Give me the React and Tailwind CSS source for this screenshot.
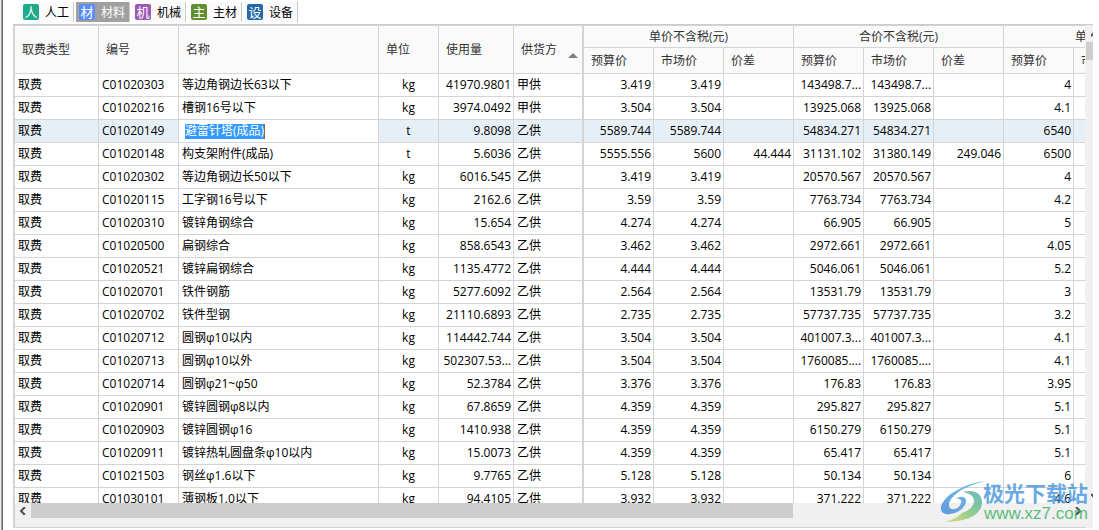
import { useState } from "react";

const tabs = [
  { id: "labor", badge: "人", label: "人工", color: "bg-[#1fab89]" },
  { id: "material", badge: "材", label: "材料", color: "bg-[#5b8cff]" },
  { id: "machine", badge: "机", label: "机械", color: "bg-[#9b59b6]" },
  { id: "main", badge: "主", label: "主材", color: "bg-[#5f8f2f]" },
  { id: "equipment", badge: "设", label: "设备", color: "bg-[#2468a8]" },
];

// code, name, unit, usage, supplier, unit price x3, total price x3, taxed price
const rows = [
  ["C01020303", "等边角钢边长63以下", "kg", "41970.9801", "甲供", "3.419", "3.419", "", "143498.7...", "143498.7...", "", "4"],
  ["C01020216", "槽钢16号以下", "kg", "3974.0492", "甲供", "3.504", "3.504", "", "13925.068", "13925.068", "", "4.1"],
  ["C01020149", "避雷针塔(成品)", "t", "9.8098", "乙供", "5589.744", "5589.744", "", "54834.271", "54834.271", "", "6540"],
  ["C01020148", "构支架附件(成品)", "t", "5.6036", "乙供", "5555.556", "5600", "44.444", "31131.102", "31380.149", "249.046", "6500"],
  ["C01020302", "等边角钢边长50以下", "kg", "6016.545", "乙供", "3.419", "3.419", "", "20570.567", "20570.567", "", "4"],
  ["C01020115", "工字钢16号以下", "kg", "2162.6", "乙供", "3.59", "3.59", "", "7763.734", "7763.734", "", "4.2"],
  ["C01020310", "镀锌角钢综合", "kg", "15.654", "乙供", "4.274", "4.274", "", "66.905", "66.905", "", "5"],
  ["C01020500", "扁钢综合", "kg", "858.6543", "乙供", "3.462", "3.462", "", "2972.661", "2972.661", "", "4.05"],
  ["C01020521", "镀锌扁钢综合", "kg", "1135.4772", "乙供", "4.444", "4.444", "", "5046.061", "5046.061", "", "5.2"],
  ["C01020701", "铁件钢筋", "kg", "5277.6092", "乙供", "2.564", "2.564", "", "13531.79", "13531.79", "", "3"],
  ["C01020702", "铁件型钢", "kg", "21110.6893", "乙供", "2.735", "2.735", "", "57737.735", "57737.735", "", "3.2"],
  ["C01020712", "圆钢φ10以内", "kg", "114442.744", "乙供", "3.504", "3.504", "", "401007.3...", "401007.3...", "", "4.1"],
  ["C01020713", "圆钢φ10以外", "kg", "502307.53...", "乙供", "3.504", "3.504", "", "1760085....", "1760085....", "", "4.1"],
  ["C01020714", "圆钢φ21~φ50", "kg", "52.3784", "乙供", "3.376", "3.376", "", "176.83", "176.83", "", "3.95"],
  ["C01020901", "镀锌圆钢φ8以内", "kg", "67.8659", "乙供", "4.359", "4.359", "", "295.827", "295.827", "", "5.1"],
  ["C01020903", "镀锌圆钢φ16", "kg", "1410.938", "乙供", "4.359", "4.359", "", "6150.279", "6150.279", "", "5.1"],
  ["C01020911", "镀锌热轧圆盘条φ10以内", "kg", "15.0073", "乙供", "4.359", "4.359", "", "65.417", "65.417", "", "5.1"],
  ["C01021503", "钢丝φ1.6以下", "kg", "9.7765", "乙供", "5.128", "5.128", "", "50.134", "50.134", "", "6"],
  ["C01030101", "薄钢板1.0以下", "kg", "94.4105", "乙供", "3.932", "3.932", "", "371.222", "371.222", "", "4.6"],
];

const groups = ["单价不含税(元)", "合价不含税(元)", "单价含税(元)"];

const Chevron = ({ d }) => (
  <svg width="8" height="8" viewBox="0 0 8 8" fill="none" stroke="#505050" strokeWidth="2">
    <path d={d} />
  </svg>
);

const TabBar = ({ active, onSelect }) => (
  <div role="tablist" className="flex h-6 shrink-0 gap-[2px] pt-[2px] pl-[7px]">
    {tabs.map((tab) => {
      const selected = tab.id === active;
      return (
        <button
          key={tab.id}
          type="button"
          role="tab"
          aria-selected={selected}
          onClick={() => onSelect(tab.id)}
          className={`flex h-5 items-center gap-[6px] border-r border-[#c8c8c8] pr-1 pl-[3px] ${
            selected ? "bg-[#a0a0a0] text-white" : "bg-[#fafafa] text-black"
          }`}
        >
          <span className={`flex size-4 items-center justify-center rounded-[2px] text-[13px] leading-4 text-white ${tab.color}`}>
            {tab.badge}
          </span>
          <span className="pt-[2px] leading-4">{tab.label}</span>
        </button>
      );
    })}
  </div>
);

const HeadCell = ({ children, className = "pl-[7px] text-left", ...rest }) => (
  <th
    className={`border-r border-b border-[#d4d4d4] bg-[#fafafa] font-normal whitespace-nowrap text-[#333333] ${className}`}
    {...rest}
  >
    {children}
  </th>
);

const Cell = ({ children, className = "" }) => (
  <td className={`h-[23px] overflow-hidden border-r border-b border-[#d4d4d4] whitespace-nowrap ${className}`}>
    {children}
  </td>
);

const MaterialTable = () => {
  const [selectedCode, setSelectedCode] = useState("C01020149");
  const [editedName, setEditedName] = useState("避雷针塔(成品)");

  return (
    <table className="w-[1199px] table-fixed border-separate border-spacing-0 leading-4">
      <colgroup>
        <col className="w-[84px]" />
        <col className="w-[80px]" />
        <col className="w-[200px]" />
        <col className="w-[60px]" />
        <col className="w-[75px]" />
        <col className="w-[70px]" />
        <col span={9} className="w-[70px]" />
      </colgroup>
      <thead>
        <tr className="h-[22px]">
          <HeadCell rowSpan={2}>取费类型</HeadCell>
          <HeadCell rowSpan={2}>编号</HeadCell>
          <HeadCell rowSpan={2}>名称</HeadCell>
          <HeadCell rowSpan={2}>单位</HeadCell>
          <HeadCell rowSpan={2}>使用量</HeadCell>
          <HeadCell rowSpan={2} className="border-r-2 pl-[7px] text-left" aria-sort="ascending">
            <div className="flex items-center justify-between pr-1">
              供货方
              <svg className="mt-3" width="10" height="5" viewBox="0 0 10 5" fill="#808080">
                <path d="M5 0 10 5H0z" />
              </svg>
            </div>
          </HeadCell>
          {groups.map((group) => (
            <HeadCell key={group} colSpan={3} className="text-center">
              {group}
            </HeadCell>
          ))}
        </tr>
        <tr className="h-[26px]">
          {groups.map((group) =>
            ["预算价", "市场价", "价差"].map((label) => (
              <HeadCell key={group + label}>{label}</HeadCell>
            ))
          )}
        </tr>
      </thead>
      <tbody>
        {rows.map(([code, name, unit, usage, supplier, ...prices]) => {
          const selected = code === selectedCode;
          return (
            <tr key={code} onClick={() => setSelectedCode(code)} className={selected ? "bg-[#e6eff5]" : "bg-white"}>
              <Cell className="pl-[3px]">取费</Cell>
              <Cell className="pl-[3px]">{code}</Cell>
              {code === "C01020149" ? (
                <Cell className="bg-white pl-[6px]">
                  <input
                    aria-label="名称"
                    value={editedName}
                    onChange={(e) => setEditedName(e.target.value)}
                    className="block h-[15px] field-sizing-content border-r border-[#a06030] bg-[#3399ff] leading-4 text-white outline-none"
                  />
                </Cell>
              ) : (
                <Cell className="pl-[3px]">{name}</Cell>
              )}
              <Cell className="text-center">{unit}</Cell>
              <Cell className="pr-[2px] text-right">{usage}</Cell>
              <Cell className="border-r-2 pl-[3px]">{supplier}</Cell>
              {prices.map((price, i) => (
                <Cell key={i} className="pr-[2px] text-right">
                  {price}
                </Cell>
              ))}
              <Cell />
              <Cell />
            </tr>
          );
        })}
      </tbody>
    </table>
  );
};

const VerticalScrollbar = () => (
  <div className="w-[7px] shrink-0 overflow-hidden bg-[#f0f0f0] pb-6">
    <div className="flex h-full w-[17px] flex-col">
      <button type="button" aria-label="向上滚动" className="flex h-[17px] shrink-0 items-center justify-center">
        <Chevron d="M0 6 4 2l4 4" />
      </button>
      <div className="h-[18px] shrink-0 bg-[#cdcdcd]" />
      <div className="flex-1" />
      <button type="button" aria-label="向下滚动" className="flex h-[17px] shrink-0 items-center justify-center">
        <Chevron d="M0 2l4 4 4-4" />
      </button>
    </div>
  </div>
);

const HorizontalScrollbar = () => (
  <div className="flex h-[15px] shrink-0">
    <button type="button" aria-label="向左滚动" className="flex w-4 items-center justify-center">
      <Chevron d="M6 0 2 4l4 4" />
    </button>
    <div className="flex-[11] bg-[#cdcdcd]" />
    <div className="flex-[4]" />
    <button type="button" aria-label="向右滚动" className="flex w-4 items-center justify-center">
      <Chevron d="M2 0l4 4-4 4" />
    </button>
  </div>
);

const Watermark = () => (
  <div className="pointer-events-none absolute right-[11px] bottom-[7px] flex items-center opacity-80">
    <svg className="overflow-visible" width="42" height="42" viewBox="0 0 42 42">
      <defs>
        <linearGradient id="wave" x1="1" y1="0" x2="0" y2="1">
          <stop offset="0" stopColor="#58b4e0" />
          <stop offset="1" stopColor="#3f86d8" />
        </linearGradient>
        <linearGradient id="leaf" x1="1" y1="0" x2="0" y2="1">
          <stop offset="0" stopColor="#3fa8b0" />
          <stop offset="0.5" stopColor="#7cc478" />
          <stop offset="1" stopColor="#d6dc5c" />
        </linearGradient>
      </defs>
      <path
        d="M44 0C26 2 3 13 0 26c-1 5 3 8 9 7 8-1 15-6 16-12 1-5-5-7-10-3 3-1 6 0 5 4-1 5-8 8-11 5-3-4 1-10 6-14C22 7 33 3 44 0z"
        fill="url(#wave)"
      />
      <path d="M22 11c10-3 19 1 19 10 0 12-13 20-38 20 9-2 14-5 18-9 6-2 12-6 12-12 0-5-5-8-11-9z" fill="url(#leaf)" />
    </svg>
    <div className="flex flex-col">
      <span className="text-[21px] leading-6 font-bold text-[#4595dc]">极光下载站</span>
      <span className="pl-px font-['Liberation_Sans',sans-serif] text-[17px] leading-[18px] text-[#35b060]">
        www.xz7.com
      </span>
    </div>
  </div>
);

const App = () => {
  const [activeTab, setActiveTab] = useState("material");

  return (
    <div className="relative flex h-screen overflow-hidden bg-white font-['Open_Sans','Noto_Sans_CJK_SC',sans-serif] text-[12px] text-black">
      {/* Window edge */}
      <div className="w-[3px] shrink-0 border-r border-l border-r-[#696969] border-l-[#f0f0f0] bg-[#a0a0a0]" />

      <div className="flex min-w-0 flex-1 flex-col pr-[6px] pb-[2px] pl-[10px]">
        <TabBar active={activeTab} onSelect={setActiveTab} />

        <div className="flex min-h-0 flex-1 border-t border-[#cfc8cf]">
          <div className="flex min-w-0 flex-1 flex-col border-t border-b border-l-2 border-[#d4d4d4] bg-[#f0f0f0]">
            <div className="mr-px min-h-0 flex-1 overflow-hidden bg-white">
              <MaterialTable />
            </div>
            <HorizontalScrollbar />
            <div className="h-[9px] shrink-0" />
          </div>
          <VerticalScrollbar />
        </div>
      </div>

      <Watermark />
    </div>
  );
};

export default App;
